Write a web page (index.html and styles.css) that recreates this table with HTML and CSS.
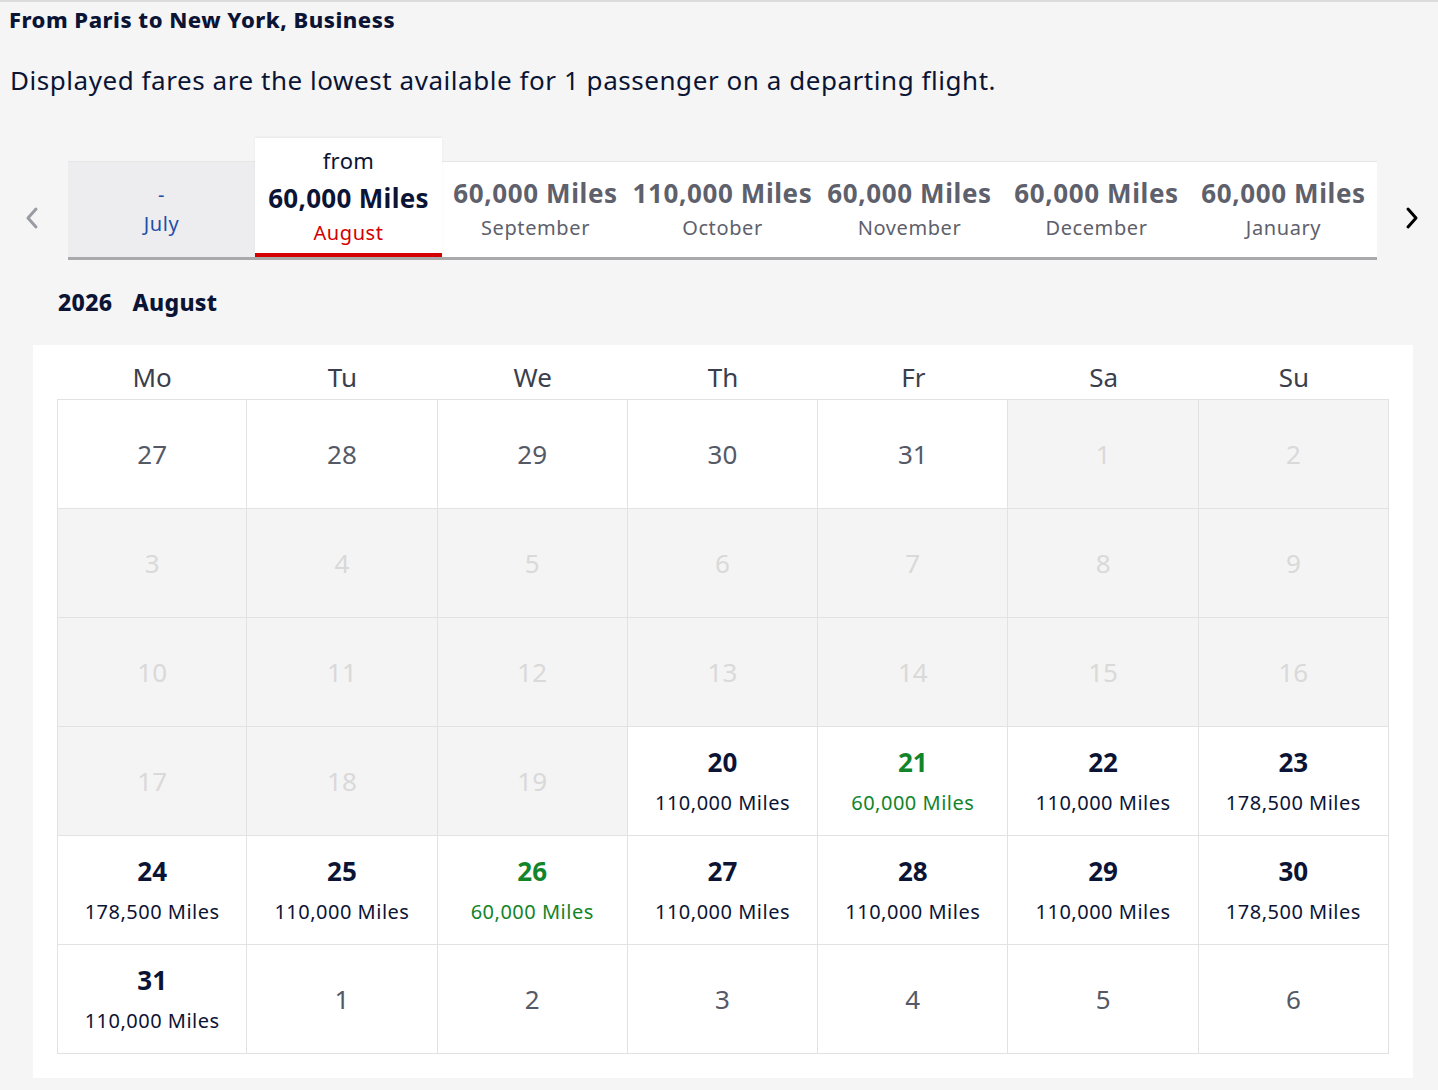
FILE: index.html
```html
<!DOCTYPE html>
<html lang="en">
<head>
<meta charset="utf-8">
<title>Fares calendar</title>
<link rel="stylesheet" href="styles.css">
</head>
<body>
<div class="page">
  <h1 class="title">From Paris to New York, Business</h1>
  <p class="subtitle">Displayed fares are the lowest available for 1 passenger on a departing flight.</p>

  <div class="carousel">
    <button class="nav nav-prev" aria-label="Previous">
      <svg width="16" height="24" viewBox="0 0 16 24"><path d="M12 3 L4 12 L12 21" fill="none" stroke="#9a9ca3" stroke-width="3" stroke-linecap="round" stroke-linejoin="round"/></svg>
    </button>
    <div class="tabs">
      <div class="tab tab-past"><span class="tab-price dash">-</span><span class="tab-month">July</span></div>
      <div class="tab tab-active"><span class="tab-from">from</span><span class="tab-price">60,000 Miles</span><span class="tab-month">August</span></div>
      <div class="tab"><span class="tab-price">60,000 Miles</span><span class="tab-month">September</span></div>
      <div class="tab"><span class="tab-price">110,000 Miles</span><span class="tab-month">October</span></div>
      <div class="tab"><span class="tab-price">60,000 Miles</span><span class="tab-month">November</span></div>
      <div class="tab"><span class="tab-price">60,000 Miles</span><span class="tab-month">December</span></div>
      <div class="tab"><span class="tab-price">60,000 Miles</span><span class="tab-month">January</span></div>
    </div>
    <button class="nav nav-next" aria-label="Next">
      <svg width="16" height="24" viewBox="0 0 16 24"><path d="M4 3 L12 12 L4 21" fill="none" stroke="#000" stroke-width="3" stroke-linecap="round" stroke-linejoin="round"/></svg>
    </button>
  </div>

  <h2 class="month-heading"><span>2026</span><span>August</span></h2>

  <div class="calendar">
    <div class="dow">Mo</div><div class="dow">Tu</div><div class="dow">We</div><div class="dow">Th</div><div class="dow">Fr</div><div class="dow">Sa</div><div class="dow">Su</div>

    <div class="cell"><span class="num">27</span></div>
    <div class="cell"><span class="num">28</span></div>
    <div class="cell"><span class="num">29</span></div>
    <div class="cell"><span class="num">30</span></div>
    <div class="cell"><span class="num">31</span></div>
    <div class="cell off"><span class="num">1</span></div>
    <div class="cell off"><span class="num">2</span></div>

    <div class="cell off"><span class="num">3</span></div>
    <div class="cell off"><span class="num">4</span></div>
    <div class="cell off"><span class="num">5</span></div>
    <div class="cell off"><span class="num">6</span></div>
    <div class="cell off"><span class="num">7</span></div>
    <div class="cell off"><span class="num">8</span></div>
    <div class="cell off"><span class="num">9</span></div>

    <div class="cell off"><span class="num">10</span></div>
    <div class="cell off"><span class="num">11</span></div>
    <div class="cell off"><span class="num">12</span></div>
    <div class="cell off"><span class="num">13</span></div>
    <div class="cell off"><span class="num">14</span></div>
    <div class="cell off"><span class="num">15</span></div>
    <div class="cell off"><span class="num">16</span></div>

    <div class="cell off"><span class="num">17</span></div>
    <div class="cell off"><span class="num">18</span></div>
    <div class="cell off"><span class="num">19</span></div>
    <div class="cell fare"><span class="num">20</span><span class="miles">110,000 Miles</span></div>
    <div class="cell fare best"><span class="num">21</span><span class="miles">60,000 Miles</span></div>
    <div class="cell fare"><span class="num">22</span><span class="miles">110,000 Miles</span></div>
    <div class="cell fare"><span class="num">23</span><span class="miles">178,500 Miles</span></div>

    <div class="cell fare"><span class="num">24</span><span class="miles">178,500 Miles</span></div>
    <div class="cell fare"><span class="num">25</span><span class="miles">110,000 Miles</span></div>
    <div class="cell fare best"><span class="num">26</span><span class="miles">60,000 Miles</span></div>
    <div class="cell fare"><span class="num">27</span><span class="miles">110,000 Miles</span></div>
    <div class="cell fare"><span class="num">28</span><span class="miles">110,000 Miles</span></div>
    <div class="cell fare"><span class="num">29</span><span class="miles">110,000 Miles</span></div>
    <div class="cell fare"><span class="num">30</span><span class="miles">178,500 Miles</span></div>

    <div class="cell fare"><span class="num">31</span><span class="miles">110,000 Miles</span></div>
    <div class="cell"><span class="num">1</span></div>
    <div class="cell"><span class="num">2</span></div>
    <div class="cell"><span class="num">3</span></div>
    <div class="cell"><span class="num">4</span></div>
    <div class="cell"><span class="num">5</span></div>
    <div class="cell"><span class="num">6</span></div>
  </div>
</div>
</body>
</html>
```

FILE: styles.css
```css
* { box-sizing: border-box; }

html, body {
  margin: 0;
  padding: 0;
  background: #f5f5f5;
}

body {
  font-family: "Noto Sans", "Liberation Sans", sans-serif;
  color: #0b1435;
}

.page {
  border-top: 2px solid #dcdcdc;
  min-height: 1090px;
}

.title {
  margin: 0;
  padding: 2px 0 0 9px;
  font-size: 22px;
  line-height: 30px;
  font-weight: 800;
  letter-spacing: 0.5px;
  color: #0b1435;
}

.subtitle {
  margin: 0;
  padding: 29px 0 0 10px;
  font-size: 26px;
  line-height: 34px;
  font-weight: 400;
  letter-spacing: 0.55px;
  color: #0b1435;
}

.carousel {
  display: flex;
  align-items: flex-end;
  margin-top: 37px;
  height: 123px;
}

.nav {
  border: 0;
  background: transparent;
  padding: 24px 0 0;
  display: flex;
  align-items: center;
  justify-content: center;
  height: 96px;
  margin-bottom: 3px;
}

.nav-prev { width: 68px; padding-right: 4px; }
.nav-next { width: 61px; padding-left: 8px; }

.tabs {
  display: grid;
  grid-template-columns: repeat(7, 187px);
  align-items: end;
  background: #fff;
  border-top: 1px solid #e6e6e6;
  box-shadow: 0 3px 0 #a9a9ab;
  height: 96px;
  position: relative;
}

.tab {
  display: flex;
  flex-direction: column;
  align-items: center;
  justify-content: center;
  height: 95px;
  background: #fff;
  text-align: center;
}

.tab-price {
  font-size: 26px;
  line-height: 32px;
  font-weight: 700;
  color: #5e606c;
  white-space: nowrap;
  letter-spacing: 0.6px;
}

.tab-month {
  font-size: 20px;
  line-height: 28px;
  color: #5e606c;
  margin-top: 5px;
  letter-spacing: 0.6px;
}

.tab-past {
  background: #ededf0;
}

.tab-past .tab-price,
.tab-past .tab-month {
  color: #1f4fa6;
  font-weight: 400;
}

.tab-past .dash {
  font-size: 20px;
  line-height: 26px;
}

.tab-past .tab-month { margin-top: 2px; }

.tab-active {
  height: 119px;
  margin-top: -24px;
  border-bottom: 4px solid #d40000;
  justify-content: flex-start;
  padding-top: 6px;
  box-shadow: 0 -1px 2px rgba(0,0,0,0.06);
  position: relative;
  z-index: 2;
}

.tab-active .tab-from {
  font-size: 22px;
  line-height: 32px;
  color: #0b1435;
  letter-spacing: 0.4px;
}

.tab-active .tab-price {
  color: #0b1435;
  margin-top: 6px;
  letter-spacing: 0.3px;
}

.tab-active .tab-month {
  color: #d40000;
  margin-top: 5px;
}

.month-heading {
  margin: 0;
  padding: 27px 0 0 58px;
  font-size: 23px;
  line-height: 36px;
  font-weight: 800;
  letter-spacing: 0.3px;
  color: #0b1435;
  display: flex;
  gap: 20px;
}

.calendar {
  margin: 25px 0 0 33px;
  width: 1380px;
  background: #fff;
  padding: 0 24px 24px;
  display: grid;
  grid-template-columns: repeat(7, 1fr);
  grid-auto-rows: 109px;
  grid-template-rows: 55px;
}

.dow {
  display: flex;
  align-items: center;
  justify-content: center;
  font-size: 26px;
  color: #3b3e4c;
  border-bottom: 1px solid #e2e2e2;
  padding-top: 10px;
}

.cell {
  display: flex;
  flex-direction: column;
  align-items: center;
  justify-content: center;
  border-right: 1px solid #e2e2e2;
  border-bottom: 1px solid #e2e2e2;
  background: #fff;
}

.cell:nth-child(7n+1) { border-left: 1px solid #e2e2e2; }

.cell.off { background: #f4f4f4; }

.num {
  font-size: 26px;
  line-height: 32px;
  color: #555966;
}

.cell.off .num { color: #d9d9d9; }

.cell.fare .num {
  font-weight: 700;
  color: #0b1435;
}

.miles {
  font-size: 20px;
  line-height: 28px;
  margin-top: 11px;
  color: #0b1435;
  letter-spacing: 0.5px;
}

.cell.best .num,
.cell.best .miles { color: #12842a; }
```
